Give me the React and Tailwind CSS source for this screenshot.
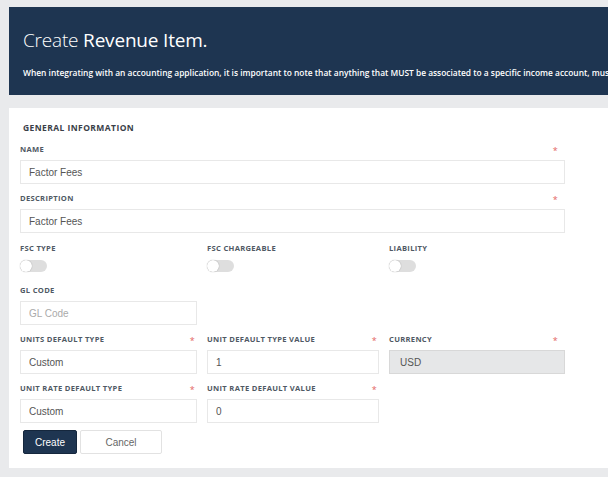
const labelCls =
  "h-[12px] mb-[4px] flex items-center justify-between text-[7.6px] font-bold tracking-[0.04em] text-[#4f5964] uppercase font-['Open_Sans',sans-serif]";
const inputBase =
  "block h-[24px] w-full border px-[8px] text-[10px] text-[#555] font-['Liberation_Sans',Arial,sans-serif] outline-none placeholder:text-[#aaa]";

function Field({ label, value, required, placeholder, disabled, starPad = "pr-[2px]" }) {
  return (
    <div>
      <div className={`${labelCls} ${starPad}`}>
        <span>{label}</span>
        {required && <span className="text-[#e36464] text-[9px] font-normal leading-none">*</span>}
      </div>
      <input
        className={
          disabled
            ? `${inputBase} bg-[#e6e7e8] border-[#d8d8d8] pl-[10px]`
            : `${inputBase} bg-white border-[#e8e8e8]`
        }
        defaultValue={value}
        placeholder={placeholder}
        readOnly
      />
    </div>
  );
}

function Toggle({ label }) {
  return (
    <div>
      <div className={labelCls}>
        <span>{label}</span>
      </div>
      <div className="mt-[5px] relative w-[27px] h-[12px] rounded-full bg-[#dedede]">
        <div className="absolute left-0 top-0 w-[12px] h-[12px] rounded-full bg-white shadow-[0_0_1px_rgba(0,0,0,0.4)]" />
      </div>
    </div>
  );
}

export default function App() {
  return (
    <div className="w-[608px] h-[477px] overflow-hidden bg-[#e9eaec]">
      <div className="w-[660px] ml-[9px] pt-[7px]">
        {/* Header */}
        <div className="h-[88px] bg-[#1e3551] pl-[14px] pt-[21px] text-white font-['Open_Sans',sans-serif] overflow-hidden">
          <h1 className="text-[19px] leading-[24px] tracking-[-0.01em]">
            <span className="font-light">Create</span> <span>Revenue Item.</span>
          </h1>
          <p className="mt-[15px] text-[8.4px] font-semibold whitespace-nowrap">
            When integrating with an accounting application, it is important to note that anything that MUST be associated to a specific income account, must have its own item.
          </p>
        </div>

        {/* Card */}
        <div className="mt-[13px] bg-white pl-[11px] pt-[14px] pb-[14px]">
          <div className="w-[545px]">
            <div className="h-[12px] pl-[3px] mb-[10px] flex items-center text-[8.5px] font-bold tracking-[0.05em] text-[#3a4048] font-['Open_Sans',sans-serif]">
              GENERAL INFORMATION
            </div>

            <Field label="Name" value="Factor Fees" required starPad="pr-[7px]" />
            <div className="mt-[9px]">
              <Field label="Description" value="Factor Fees" required starPad="pr-[7px]" />
            </div>

            <div className="mt-[10px] grid grid-cols-[177px_172px_176px] gap-x-[10px]">
              <Toggle label="FSC Type" />
              <Toggle label="FSC Chargeable" />
              <Toggle label="Liability" />
            </div>

            <div className="mt-[13px] grid grid-cols-[177px_172px_176px] gap-x-[10px] gap-y-[9px]">
              <Field label="GL Code" placeholder="GL Code" />
              <div />
              <div />
              <Field label="Units Default Type" value="Custom" required />
              <Field label="Unit Default Type Value" value="1" required />
              <Field label="Currency" value="USD" required disabled starPad="pr-[7px]" />
              <Field label="Unit Rate Default Type" value="Custom" required />
              <Field label="Unit Rate Default Value" value="0" required />
              <div />
            </div>

            <div className="mt-[7px] pl-[3px] flex gap-[3px] font-['Liberation_Sans',Arial,sans-serif] text-[10px]">
              <button className="h-[24px] w-[54px] bg-[#1e3551] border border-[#15273d] text-white rounded-[2px]">
                Create
              </button>
              <button className="h-[24px] w-[82px] bg-white border border-[#e2e2e2] text-[#666] rounded-[2px]">
                Cancel
              </button>
            </div>
          </div>
        </div>
      </div>
    </div>
  );
}
